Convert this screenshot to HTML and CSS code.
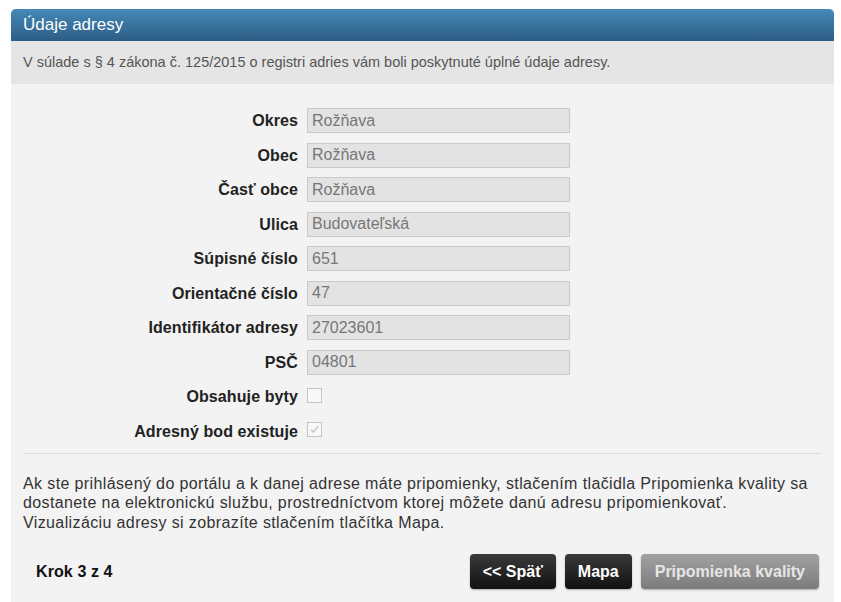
FILE: index.html
```html
<!DOCTYPE html>
<html>
<head>
  <title>Údaje adresy</title>
  <link rel="stylesheet" href="styles.css">
</head>
<body>
  <div class="panel">
    <div class="panel-heading">Údaje adresy</div>
    <div class="panel-info">V súlade s § 4 zákona č. 125/2015 o registri adries vám boli poskytnuté úplné údaje adresy.</div>

    <div class="panel-body">
      <div class="form-grid">
        <label>Okres</label><input class="field" type="text" value="Rožňava" disabled>
        <label>Obec</label><input class="field" type="text" value="Rožňava" disabled>
        <label>Časť obce</label><input class="field" type="text" value="Rožňava" disabled>
        <label>Ulica</label><input class="field" type="text" value="Budovateľská" disabled>
        <label>Súpisné číslo</label><input class="field" type="text" value="651" disabled>
        <label>Orientačné číslo</label><input class="field" type="text" value="47" disabled>
        <label>Identifikátor adresy</label><input class="field" type="text" value="27023601" disabled>
        <label>PSČ</label><input class="field" type="text" value="04801" disabled>
        <label>Obsahuje byty</label><div class="check-cell"><span class="check"></span></div>
        <label>Adresný bod existuje</label>
        <div class="check-cell">
          <span class="check">
            <svg width="13" height="13" viewBox="0 0 13 13"><path d="M3 6.8 L5.4 9.3 L10.2 3.2" fill="none" stroke="#c4c4c4" stroke-width="1.4"/></svg>
          </span>
        </div>
      </div>

      <hr class="divider">

      <p class="note">Ak ste prihlásený do portálu a k danej adrese máte pripomienky, stlačením tlačidla Pripomienka kvality sa dostanete na elektronickú službu, prostredníctvom ktorej môžete danú adresu pripomienkovať.<br>Vizualizáciu adresy si zobrazíte stlačením tlačítka Mapa.</p>

      <div class="footer">
        <span class="step">Krok 3 z 4</span>
        <div class="buttons">
          <button class="btn">&lt;&lt; Späť</button>
          <button class="btn">Mapa</button>
          <button class="btn btn-disabled">Pripomienka kvality</button>
        </div>
      </div>
    </div>
  </div>
</body>
</html>
```

FILE: styles.css
```css
body {
  margin: 0;
  background-color: #fff;
  font-family: "Liberation Sans", Arial, sans-serif;
  color: #333;
}

.panel {
  margin: 9px 7px 0 11px;
  background-color: #f3f3f3;
  min-height: 593px;
}

.panel-heading {
  height: 32px;
  line-height: 32px;
  padding-left: 12px;
  font-size: 17px;
  color: #fff;
  border-radius: 5px 5px 0 0;
  background: linear-gradient(to bottom, #4489b7, #2d5d85);
}

.panel-info {
  height: 43px;
  line-height: 43px;
  padding: 0 12px;
  font-size: 14.5px;
  color: #555;
  background-color: #e5e5e5;
}

.panel-body {
  padding: 24px 13px 0 12px;
}

.form-grid {
  display: grid;
  grid-template-columns: 275px 263px;
  column-gap: 9px;
  row-gap: 9.5px;
}

.form-grid label {
  font-size: 16px;
  font-weight: bold;
  letter-spacing: 0.1px;
  color: #222;
  text-align: right;
  line-height: 25px;
}

.field {
  box-sizing: border-box;
  height: 25px;
  width: 263px;
  margin: 0;
  padding: 0 4px;
  font-family: "Liberation Sans", Arial, sans-serif;
  font-size: 16px;
  color: #777;
  background-color: #e3e3e3;
  border: 1px solid #c9c9c9;
}

.check-cell {
  height: 25px;
  display: flex;
  align-items: center;
}

.check {
  box-sizing: border-box;
  width: 15px;
  height: 15px;
  margin-top: -3px;
  border: 1px solid #c4c4c4;
  background-color: #f8f8f8;
  display: flex;
  align-items: center;
  justify-content: center;
}

.divider {
  border: none;
  border-top: 1px solid #dcdcdc;
  margin: 9px 0 0 0;
}

.note {
  margin: 20px 0 0 0;
  font-size: 16px;
  letter-spacing: 0.38px;
  line-height: 19.5px;
  color: #333;
}

.footer {
  display: flex;
  align-items: center;
  justify-content: space-between;
  margin-top: 22px;
  padding: 0 2px 0 13px;
}

.step {
  font-size: 16px;
  font-weight: bold;
  letter-spacing: 0.1px;
  color: #111;
}

.buttons {
  display: flex;
  gap: 9px;
}

.btn {
  height: 35px;
  padding: 0 13px;
  font-family: "Liberation Sans", Arial, sans-serif;
  font-size: 16px;
  font-weight: bold;
  color: #fff;
  border: none;
  border-radius: 4px;
  background: linear-gradient(to bottom, #3a3a3a, #111);
  box-shadow: 0 1px 2px rgba(0, 0, 0, 0.3);
  cursor: pointer;
}

.btn-disabled {
  padding: 0 14px;
  color: #e6e6e6;
  background: linear-gradient(to bottom, #a2a2a2, #7b7b7b);
  cursor: default;
}
```
